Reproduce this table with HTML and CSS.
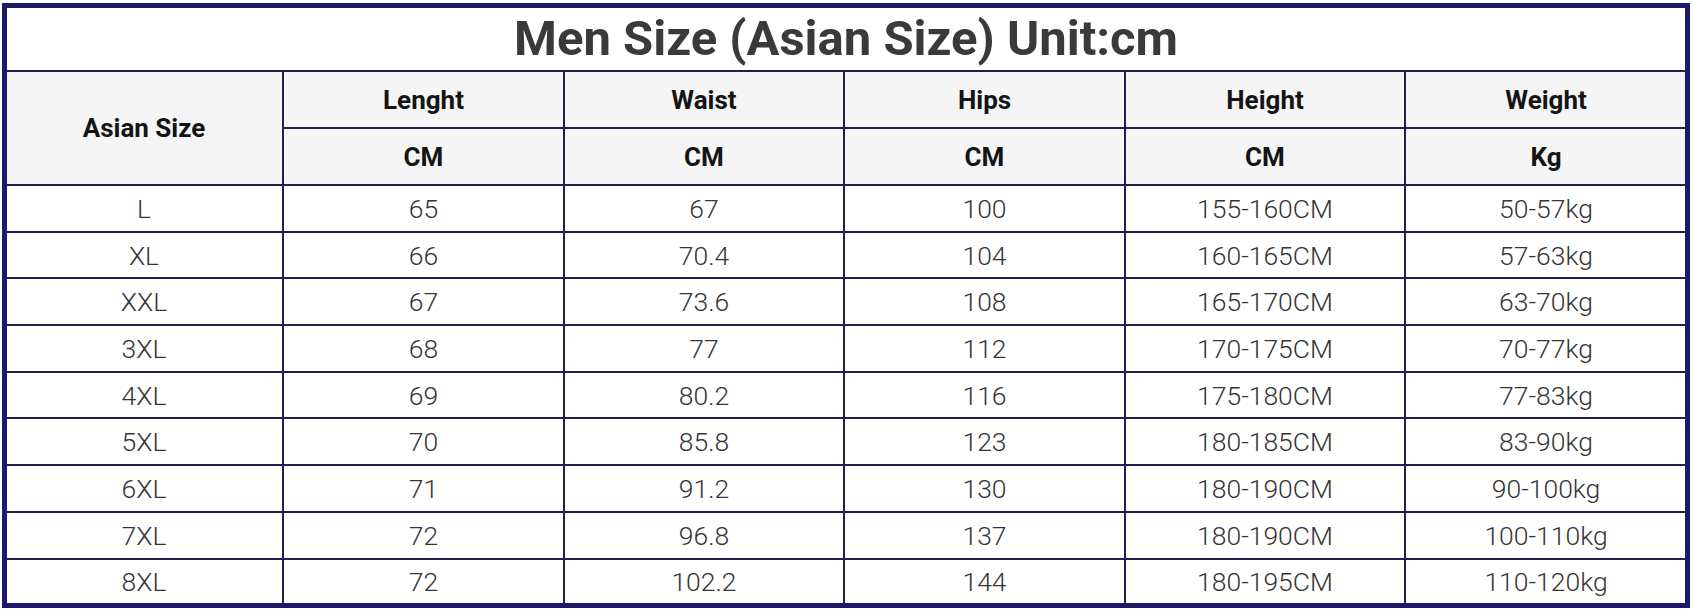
FILE: index.html
```html
<!DOCTYPE html>
<html>
<head>
<meta charset="utf-8">
<link rel="stylesheet" href="styles.css">
</head>
<body>
<div class="frame">
  <table class="chart">
    <colgroup>
      <col class="c1"><col class="c2"><col class="c3"><col class="c4"><col class="c5"><col class="c6">
    </colgroup>
    <thead>
      <tr class="title-row"><th colspan="6" class="title">Men Size (Asian Size) Unit:cm</th></tr>
      <tr class="head-row">
        <th rowspan="2">Asian Size</th>
        <th>Lenght</th><th>Waist</th><th>Hips</th><th>Height</th><th>Weight</th>
      </tr>
      <tr class="head-row">
        <th>CM</th><th>CM</th><th>CM</th><th>CM</th><th>Kg</th>
      </tr>
    </thead>
    <tbody>
      <tr><td>L</td><td>65</td><td>67</td><td>100</td><td>155-160CM</td><td>50-57kg</td></tr>
      <tr><td>XL</td><td>66</td><td>70.4</td><td>104</td><td>160-165CM</td><td>57-63kg</td></tr>
      <tr><td>XXL</td><td>67</td><td>73.6</td><td>108</td><td>165-170CM</td><td>63-70kg</td></tr>
      <tr><td>3XL</td><td>68</td><td>77</td><td>112</td><td>170-175CM</td><td>70-77kg</td></tr>
      <tr><td>4XL</td><td>69</td><td>80.2</td><td>116</td><td>175-180CM</td><td>77-83kg</td></tr>
      <tr><td>5XL</td><td>70</td><td>85.8</td><td>123</td><td>180-185CM</td><td>83-90kg</td></tr>
      <tr><td>6XL</td><td>71</td><td>91.2</td><td>130</td><td>180-190CM</td><td>90-100kg</td></tr>
      <tr><td>7XL</td><td>72</td><td>96.8</td><td>137</td><td>180-190CM</td><td>100-110kg</td></tr>
      <tr><td>8XL</td><td>72</td><td>102.2</td><td>144</td><td>180-195CM</td><td>110-120kg</td></tr>
    </tbody>
  </table>
</div>
</body>
</html>
```
FILE: styles.css
```css
html, body {
  margin: 0;
  padding: 0;
  background: #ffffff;
}
body {
  padding: 3px 3px 2px 2px;
  font-family: Roboto, "Liberation Sans", sans-serif;
}
.frame {
  width: 1678px;
  height: 595px;
  border: 5px solid #1c1a68;
  overflow: hidden;
  background: #ffffff;
}
.chart {
  width: 1680px;
  margin: -1px 0 0 -1px;
  border-collapse: collapse;
  table-layout: fixed;
}
.c1 { width: 277px; }
.c2 { width: 281px; }
.c3 { width: 280px; }
.c4 { width: 281px; }
.c5 { width: 280px; }
.c6 { width: 281px; }
.chart th, .chart td {
  border: 2px solid #221f4e;
  text-align: center;
  padding: 0;
}
.title-row .title {
  height: 63px;
  border-top: none;
  border-left: none;
  border-right: none;
  background: #ffffff;
  font-size: 49px;
  font-weight: 700;
  color: #3a3a3a;
}
.head-row th {
  height: 55px;
  background: #f5f5f5;
  font-size: 26px;
  font-weight: 700;
  color: #141414;
}
.chart tbody td {
  height: 44.7px;
  font-size: 26.5px;
  font-weight: 300;
  color: #353535;
}
.chart tbody tr:last-child td {
  border-bottom: none;
}
.chart tr > :first-child {
  border-left: none;
}
.chart tr > :last-child {
  border-right: none;
}
.chart .head-row + .head-row th:first-child {
  border-left: 2px solid #221f4e;
}
```
